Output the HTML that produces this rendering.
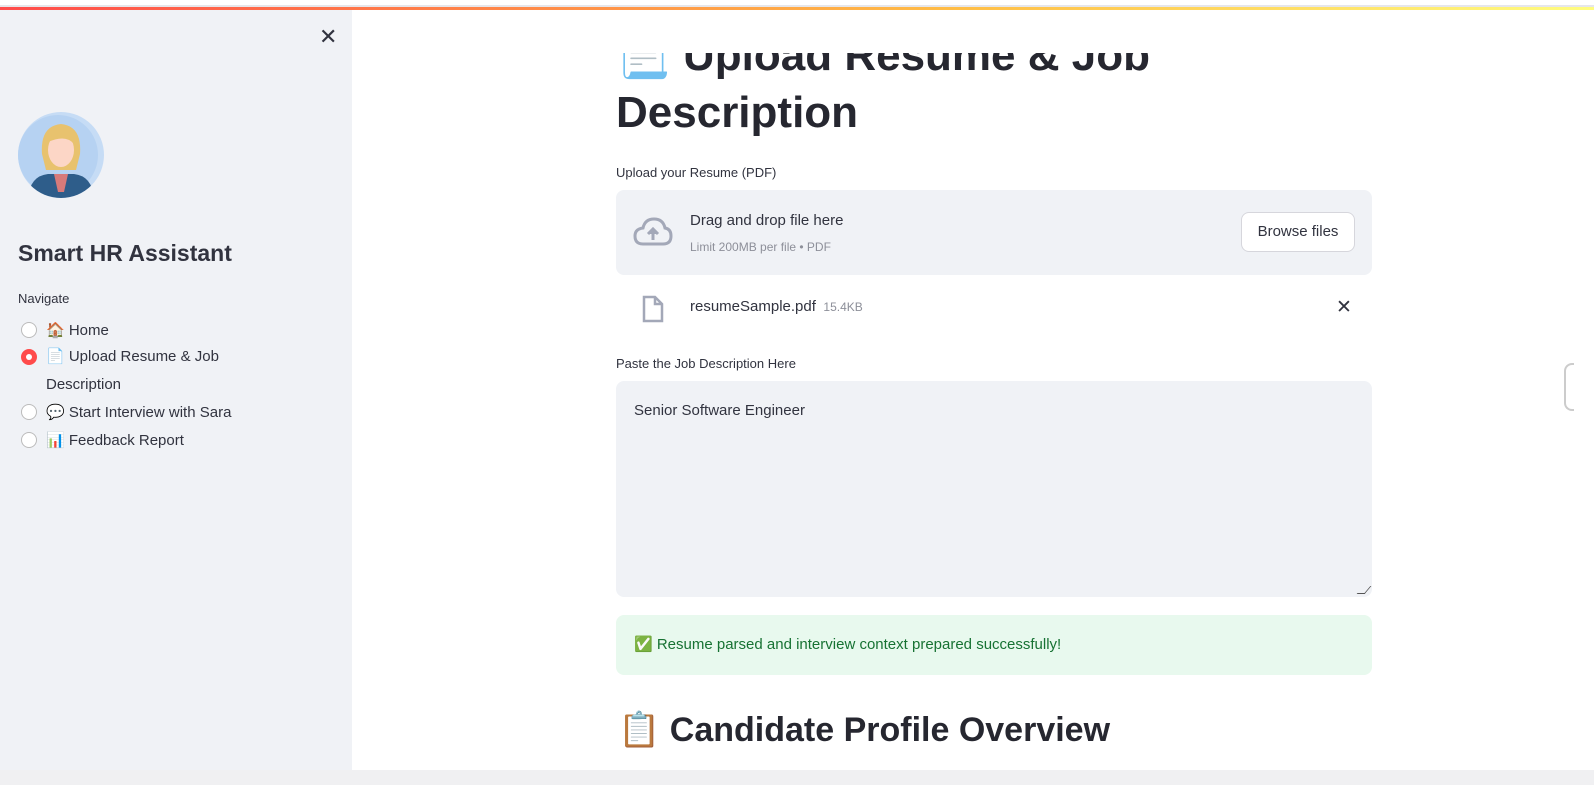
<!DOCTYPE html>
<html><head><meta charset="utf-8"><style>
*{margin:0;padding:0;box-sizing:border-box}
body{width:1594px;height:785px;overflow:hidden;background:#fff;font-family:"Liberation Sans","Noto Sans CJK SC",sans-serif;color:#31333f;position:relative}
.topline{position:absolute;left:0;top:5px;width:1594px;height:2px;background:#e6e6ea}
.grad{position:absolute;left:0;top:7px;width:1594px;height:3px;background:linear-gradient(90deg,#ff4b4b,#ffbd45 60%,#fffd80)}
.side{position:absolute;left:0;top:10px;width:352px;height:760px;background:#f0f2f6}
.bottom{position:absolute;left:0;top:770px;width:1594px;height:15px;background:#f0f0f2}
.abs{position:absolute}
.nav{font-size:15px;color:#31333f}
.radio{position:absolute;width:16px;height:16px;border-radius:50%;border:1px solid #bbb;background:#fff}
.radio.on{background:#ff4b4b;border-color:#ff4b4b}
.radio.on::after{content:"";position:absolute;left:4px;top:4px;width:6px;height:6px;border-radius:50%;background:#fff}
.box{position:absolute;left:616px;width:756px;background:#f0f2f6;border-radius:8px}
.lbl{position:absolute;left:616px;font-size:13px;color:#31333f}
</style></head><body>
<div class="topline"></div><div class="grad"></div>
<div class="side"></div>
<div class="abs" style="left:319px;top:24px;font-size:22px;color:#31333f">✕</div>
<svg class="abs" style="left:18px;top:112px" width="86" height="86" viewBox="0 0 86 86">
<circle cx="43" cy="43" r="43" fill="#c6dcf5"/><circle cx="40" cy="43" r="40" fill="#b6d2f2"/>
<clipPath id="c"><circle cx="43" cy="43" r="43"/></clipPath>
<g clip-path="url(#c)">
<path d="M24 42 Q22 14 43 12 Q64 14 62 42 L58 58 L28 58 Z" fill="#e8c26e"/>
<ellipse cx="43" cy="38" rx="13" ry="17" fill="#fcd6c6"/>
<path d="M30 30 Q35 16 50 20 Q56 24 56 32 Q48 22 30 30Z" fill="#e8c26e"/>
<path d="M10 86 Q12 64 30 62 L56 62 Q74 64 76 86 Z" fill="#2e5d8a"/>
<path d="M36 62 L50 62 L46 80 L40 80 Z" fill="#d77a7a"/>
</g></svg>
<div class="abs" style="left:18px;top:240px;font-size:23px;font-weight:bold;color:#31333f">Smart HR Assistant</div>
<div class="abs" style="left:18px;top:291px;font-size:13px">Navigate</div>
<div class="radio" style="left:21px;top:322px"></div>
<div class="radio on" style="left:21px;top:349px"></div>
<div class="radio" style="left:21px;top:404px"></div>
<div class="radio" style="left:21px;top:432px"></div>
<div class="abs nav" style="left:46px;top:321px">🏠 Home</div>
<div class="abs nav" style="left:46px;top:348px;line-height:28px;width:240px;margin-top:-5px">📄 Upload Resume &amp; Job<br>Description</div>
<div class="abs nav" style="left:46px;top:403px">💬 Start Interview with Sara</div>
<div class="abs nav" style="left:46px;top:431px">📊 Feedback Report</div>

<div class="abs" style="left:616px;top:27px;font-size:44px;font-weight:bold;line-height:57px;color:#262730">📃 Upload Resume &amp; Job<br>Description</div>
<div class="abs" style="left:353px;top:10px;width:1241px;height:43px;background:#fff"></div>

<div class="lbl" style="top:165px">Upload your Resume (PDF)</div>
<div class="box" style="top:190px;height:85px"></div>
<svg class="abs" style="left:633px;top:216px" width="40" height="32" viewBox="0 0 40 32"><path d="M10 28 Q2 28 2 20 Q2 13 10 12 Q12 3 21 3 Q30 3 32 12 Q38 13 38 20 Q38 28 30 28 Z" fill="none" stroke="#a3a8b8" stroke-width="3"/><path d="M20 24 V15 M15 18 L20 13 L25 18" stroke="#a3a8b8" stroke-width="3" fill="#a3a8b8"/></svg>
<div class="abs" style="left:690px;top:212px;font-size:15px">Drag and drop file here</div>
<div class="abs" style="left:690px;top:240px;font-size:12px;color:#8d8f99">Limit 200MB per file • PDF</div>
<div class="abs" style="left:1241px;top:212px;width:114px;height:40px;background:#fff;border:1px solid #d6d6dc;border-radius:8px;font-size:15px;text-align:center;line-height:38px">Browse files</div>
<svg class="abs" style="left:641px;top:295px" width="24" height="28" viewBox="0 0 24 28"><path d="M3 2 H14 L21 9 V26 H3 Z M14 2 V9 H21" fill="none" stroke="#a3a8b8" stroke-width="2.5"/></svg>
<div class="abs" style="left:690px;top:298px;font-size:15px">resumeSample.pdf <span style="font-size:12px;color:#8d8f99">&nbsp;15.4KB</span></div>
<div class="abs" style="left:1336px;top:296px;font-size:19px">✕</div>

<div class="lbl" style="top:356px">Paste the Job Description Here</div>
<div class="box" style="top:381px;height:216px"></div>
<div class="abs" style="left:634px;top:402px;font-size:15px">Senior Software Engineer</div>
<div class="abs" style="left:1360px;top:586px;width:8px;height:8px;border-right:1px solid #555;border-bottom:1px solid #555;transform:skew(-40deg)"></div>

<div class="box" style="top:615px;height:60px;background:#e8f9ee"></div>
<div class="abs" style="left:634px;top:635px;font-size:15px;color:#177233">✅ Resume parsed and interview context prepared successfully!</div>

<div class="abs" style="left:618px;top:710px;font-size:34px;font-weight:bold;color:#262730">📋 Candidate Profile Overview</div>
<div class="abs" style="left:1564px;top:363px;width:10px;height:48px;border:2px solid #ccc;border-right:none;border-radius:8px 0 0 8px"></div>
<div class="bottom"></div>
</body></html>
